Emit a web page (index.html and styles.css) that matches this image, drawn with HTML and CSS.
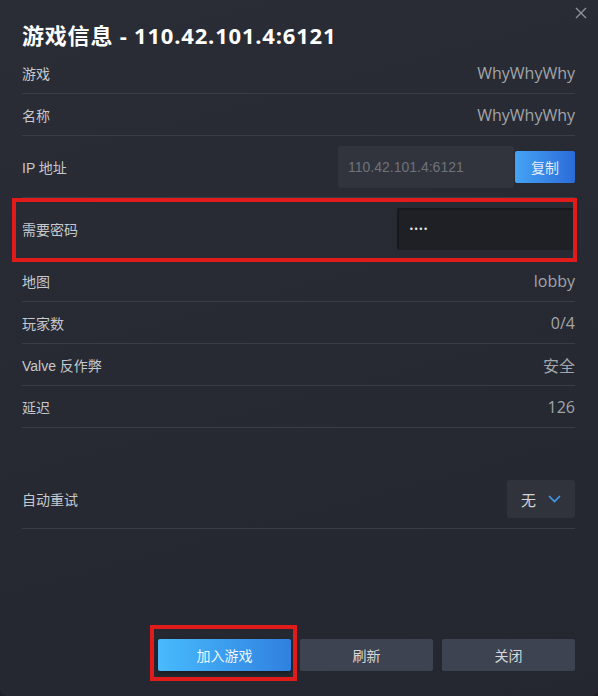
FILE: index.html
```html
<!DOCTYPE html>
<html lang="zh-CN">
<head>
<meta charset="utf-8">
<title>游戏信息</title>
<link rel="stylesheet" href="styles.css">
</head>
<body>
<div class="window">
  <button class="close" aria-label="关闭">
    <svg width="12" height="12" viewBox="0 0 12 12"><path d="M1 1L11 11M11 1L1 11" stroke="#8e9197" stroke-width="1.4" fill="none"/></svg>
  </button>
  <h1 class="title">游戏信息 - 110.42.101.4:6121</h1>
  <div class="rows">
    <div class="row"><span class="label">游戏</span><span class="value">WhyWhyWhy</span></div>
    <div class="row"><span class="label">名称</span><span class="value">WhyWhyWhy</span></div>
    <div class="row row-ip">
      <span class="label">IP 地址</span>
      <div class="ip-group">
        <div class="ip-field">110.42.101.4:6121</div>
        <button class="copy">复制</button>
      </div>
    </div>
    <div class="row row-pass">
      <span class="label">需要密码</span>
      <div class="pass-field">••••</div>
      <div class="mark mark-pass"></div>
    </div>
    <div class="row"><span class="label">地图</span><span class="value">lobby</span></div>
    <div class="row"><span class="label">玩家数</span><span class="value">0/4</span></div>
    <div class="row"><span class="label">Valve 反作弊</span><span class="value">安全</span></div>
    <div class="row"><span class="label">延迟</span><span class="value">126</span></div>
    <div class="spacer"></div>
    <div class="row row-retry">
      <span class="label">自动重试</span>
      <div class="dropdown"><span>无</span>
        <svg width="13" height="8" viewBox="0 0 13 8"><path d="M1 1L6.5 6.5L12 1" stroke="#3f9cf2" stroke-width="1.6" fill="none"/></svg>
      </div>
    </div>
  </div>
  <div class="footer">
    <div class="join-wrap">
      <button class="btn btn-primary">加入游戏</button>
      <div class="mark mark-join"></div>
    </div>
    <button class="btn">刷新</button>
    <button class="btn">关闭</button>
  </div>
</div>
</body>
</html>
```
FILE: styles.css
```css
html, body {
  margin: 0;
  padding: 0;
  height: 100%;
  background: #1d1f25;
}
body {
  font-family: "Liberation Sans", "Noto Sans CJK SC", sans-serif;
  font-size: 14px;
  color: #c4c6ca;
}
.window {
  position: relative;
  box-sizing: border-box;
  height: 696px;
  padding: 22px 23px 25px 22px;
  display: flex;
  flex-direction: column;
  background: linear-gradient(165deg, #2a2d36 0%, #272a32 45%, #24272f 100%);
  border-radius: 0 0 7px 7px;
}
.close {
  position: absolute;
  top: 6px;
  right: 10px;
  width: 14px;
  height: 14px;
  padding: 0;
  border: 0;
  background: none;
  display: flex;
  align-items: center;
  justify-content: center;
}
.title {
  margin: 0 0 4px 0;
  font-family: "Open Sans", "Noto Sans CJK SC", sans-serif;
  font-size: 22px;
  line-height: 26px;
  font-weight: bold;
  letter-spacing: 0.8px;
  color: #ffffff;
}
.rows {
  display: flex;
  flex-direction: column;
}
.row {
  position: relative;
  display: flex;
  align-items: center;
  justify-content: space-between;
  height: 41px;
  border-bottom: 1px solid #3a3d45;
}
.label {
  color: #c6c8cc;
}
.value {
  font-family: "Open Sans", "Noto Sans CJK SC", sans-serif;
  color: #a2a5aa;
  font-size: 16px;
}
.row-ip {
  height: 61px;
}
.ip-group {
  display: flex;
  align-items: center;
  gap: 1px;
}
.ip-field {
  box-sizing: border-box;
  width: 176px;
  height: 42px;
  padding: 0 10px;
  display: flex;
  align-items: center;
  background: #31343d;
  border-radius: 3px;
  color: #6e727a;
}
.copy {
  width: 60px;
  height: 32px;
  border: 0;
  border-radius: 2px;
  background: linear-gradient(90deg, #45a4f3 0%, #2b6bd9 100%);
  color: #e3ecfa;
  font-family: inherit;
  font-size: 14px;
  padding: 0;
}
.row-pass {
  height: 61px;
  border-bottom-color: transparent;
}
.pass-field {
  box-sizing: border-box;
  width: 178px;
  height: 42px;
  padding: 0 10px;
  display: flex;
  align-items: center;
  background: #1e2026;
  border-top: 2px solid #18191d;
  border-left: 2px solid #18191d;
  border-radius: 2px;
  color: #e8e8e8;
  font-family: "DejaVu Sans", sans-serif;
  font-size: 8px;
  letter-spacing: 0px;
}
.spacer {
  height: 42px;
}
.row-retry {
  height: 58px;
}
.dropdown {
  box-sizing: border-box;
  width: 68px;
  height: 38px;
  padding: 0 14px;
  display: flex;
  align-items: center;
  justify-content: space-between;
  background: #30333c;
  border-radius: 3px;
  color: #d2d4d8;
  font-size: 15px;
}
.footer {
  margin-top: auto;
  display: flex;
  justify-content: flex-end;
  gap: 9px;
}
.join-wrap {
  position: relative;
  display: flex;
}
.btn {
  width: 133px;
  height: 32px;
  padding: 0;
  border: 0;
  border-radius: 2px;
  background: #3d4350;
  color: #d6d8dc;
  font-family: inherit;
  font-size: 14px;
}
.btn-primary {
  background: linear-gradient(90deg, #48bbfd 0%, #3080df 100%);
  color: #eef6ff;
  box-shadow: 0 2px 4px rgba(0, 0, 0, 0.35);
}
.mark {
  position: absolute;
  box-sizing: border-box;
  border: 4px solid #e01b1b;
  pointer-events: none;
}
.mark-pass {
  left: -10px;
  right: -2px;
  top: 0;
  bottom: -3px;
}
.mark-join {
  left: -8px;
  right: -6px;
  top: -14px;
  bottom: -10px;
}
```
